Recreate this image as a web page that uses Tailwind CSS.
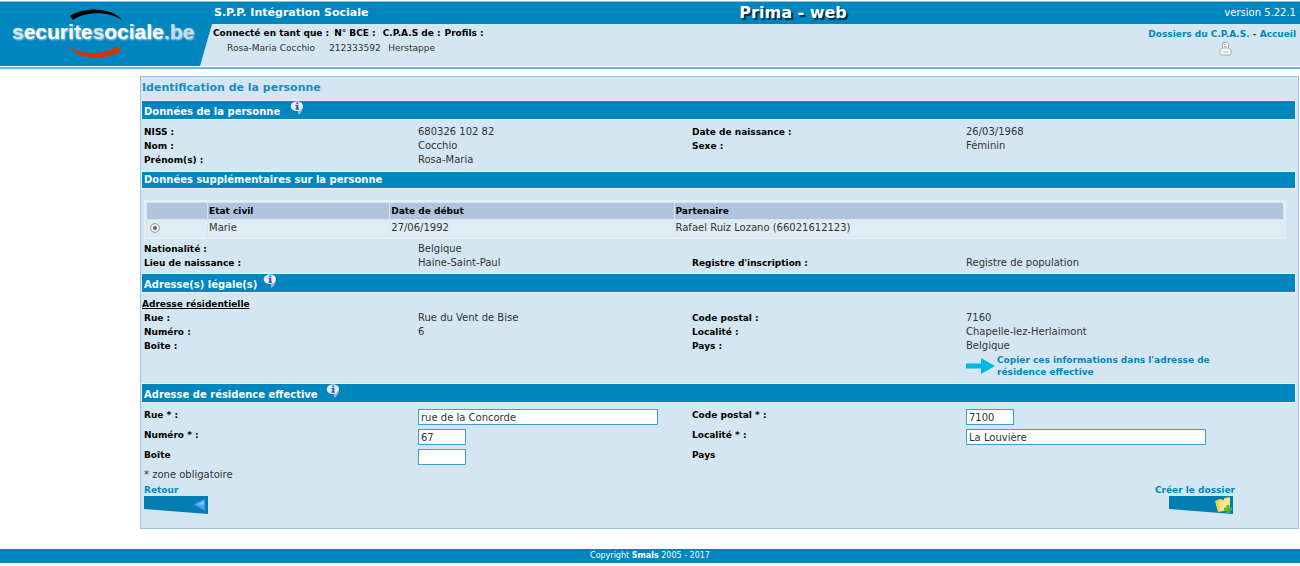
<!DOCTYPE html>
<html lang="fr">
<head>
<meta charset="utf-8">
<title>Prima - web</title>
<script src="https://cdn.jsdelivr.net/npm/@tailwindcss/browser@4"></script>
</head>
<body class="bg-white font-['Verdana','DejaVu_Sans',sans-serif] text-[10px] leading-[14px] text-[#333]">
<svg class="hidden">
  <symbol id="info" viewBox="0 0 14 14">
    <path d="M7 .5c3.600 0 6 1.900 6 4.700 0 1.700-.8 3-1.600 4.500-.8 1.500-1.600 3.300-3.200 3.800.5-1.200.5-2.500 0-3.500C3.500 10.200.8 8 .8 5.200.8 2.400 3.400.5 7 .5z" fill="#ececf8"/>
    <path d="M13 5c-.5 2.500-2 4-4.500 5 .6 1.200.4 2.300-.3 3.500 2.600-.9 4.700-5 4.800-8.500z" fill="#b4afc8"/>
    <path d="M6.300 1.500h2v1.700h-2zM5.400 4h2.900v3.600H9v1.100H5.400V7.600h.9V5.100h-.9z" fill="#2456c8"/>
  </symbol>
</svg>

<header class="mt-px border-t border-[#8cc4e0]">
  <div class="flex bg-[#d4e6f2]">
    <div class="relative h-16 w-[212px] shrink-0 bg-[#0086bf] [clip-path:polygon(0_0,100%_0,100%_22px,200px_100%,0_100%)]">
      <svg class="absolute left-[68px] top-1.5" width="58" height="52" viewBox="0 0 58 52">
        <path d="M2 8C14-1 44-2 55 13 42 3 18 3 5 12z" fill="#000"/>
        <path d="M1 38c11 9 33 10 49 0l3 5C36 53 11 53 1 38z" fill="#d23600"/>
      </svg>
      <div class="absolute left-3 top-[18px] whitespace-nowrap font-['Liberation_Sans',sans-serif] text-[21px] font-bold leading-6 text-white [text-shadow:1px_1px_2px_#b5d4e5]"><span class="text-[#d4e6f2]">s</span>ecurite<span class="text-[#d4e6f2]">s</span>ociale<span class="text-[#c3dfee]">.be</span></div>
    </div>
    <div class="min-w-0 flex-1">
      <div class="grid h-[22px] grid-cols-[48fr_40fr_12fr] items-center bg-[#0086bf] pl-0.5 pr-1 text-white">
        <span class="text-[11px] font-bold">S.P.P. Intégration Sociale</span>
        <h1 class="pl-1.5 text-base font-bold leading-5 [text-shadow:2px_2px_1px_#002b45]">Prima - web</h1>
        <span class="text-right">version 5.22.1</span>
      </div>
      <div class="flex justify-between pl-px pr-1 pt-0.5">
        <table class="h-[30px] text-center text-[9px]">
          <thead><tr class="text-black"><th>Connecté en tant que :</th><th class="pr-0.5">N° BCE :</th><th class="pr-1">C.P.A.S de :</th><th>Profils :</th></tr></thead>
          <tbody><tr><td>Rosa-Maria Cocchio</td><td class="pr-0.5">212333592</td><td class="pr-1">Herstappe</td><td></td></tr></tbody>
        </table>
        <div class="text-[9px] font-bold">
          <nav class="pt-px"><a href="#" class="text-[#0086bf]">Dossiers du C.P.A.S.</a> - <a href="#" class="text-[#0086bf]">Accueil</a></nav>
          <button type="button" aria-label="Imprimer" class="ml-auto mr-16 block">
            <svg width="13" height="15" viewBox="0 0 13 15" fill="#fafafa" stroke="#a8a8a8"><path d="M3.500 7.500l.5-6h4l1.500 1.500v4.500z"/><path d="M1 9l2-2h7l2 2v4l-1 1H2l-1-1z"/><path d="M5 3.500h2M5 5.500h3M3.500 11h6" stroke="#b5b5b5"/></svg>
          </button>
        </div>
      </div>
    </div>
  </div>
  <div class="mt-px border-b-2 border-[#6db5da]"></div>
</header>

<main class="ml-[140px] mr-px mt-[7px] border border-[#9dc3e3] bg-[#d4e6f2] pb-3.5 pl-px pr-[3px]">
  <h2 class="h-6 pt-1 text-[11px] font-bold text-[#1a8cc4]">Identification de la personne</h2>

  <h3 class="flex h-[18px] items-center gap-2.5 bg-[#0086bf] pl-0.5 pt-1 text-[10px] font-bold text-white outline outline-[#e9f3f9]">Données de la personne <svg class="mb-2 size-3.5"><use href="#info"/></svg></h3>
  <dl class="grid grid-cols-4 pb-[5px] pl-0.5 pr-[55px] pt-1.5 [&_dt]:text-[9px] [&_dt]:font-bold [&_dt]:text-black">
    <dt>NISS :</dt><dd>680326 102 82</dd><dt>Date de naissance :</dt><dd>26/03/1968</dd>
    <dt>Nom :</dt><dd>Cocchio</dd><dt>Sexe :</dt><dd>Féminin</dd>
    <dt>Prénom(s) :</dt><dd>Rosa-Maria</dd>
  </dl>

  <h3 class="flex h-4 items-center bg-[#0086bf] pl-0.5 text-[10px] font-bold text-white outline outline-[#e9f3f9]">Données supplémentaires sur la personne</h3>
  <div class="ml-0.5 mr-[9px] mt-3 border-2 border-[#e3eff7]">
    <table class="w-full table-fixed border-separate border-spacing-px text-left">
      <colgroup><col class="w-[60px]"><col class="w-4/25"><col class="w-1/4"><col></colgroup>
      <thead><tr class="bg-[#b0c4de] text-[9px] text-black [&_th]:h-4 [&_th]:px-px"><th></th><th>Etat civil</th><th>Date de début</th><th>Partenaire</th></tr></thead>
      <tbody><tr class="bg-[#dfecf4] [&_td]:h-4 [&_td]:px-px"><td class="leading-none"><input type="radio" checked aria-label="Marie" class="ml-0.5 block size-2.5 appearance-none rounded-full border border-[#aaa] bg-[#666] shadow-[inset_0_0_0_2px_#eee]"></td><td>Marie</td><td>27/06/1992</td><td>Rafael Ruiz Lozano (66021612123)</td></tr></tbody>
    </table>
  </div>
  <dl class="grid grid-cols-4 pb-1 pl-0.5 pr-[55px] pt-[3px] [&_dt]:text-[9px] [&_dt]:font-bold [&_dt]:text-black">
    <dt>Nationalité :</dt><dd class="col-span-3">Belgique</dd>
    <dt>Lieu de naissance :</dt><dd>Haine-Saint-Paul</dd><dt>Registre d'inscription :</dt><dd>Registre de population</dd>
  </dl>

  <h3 class="flex h-[18px] items-center gap-1.5 bg-[#0086bf] pl-0.5 pt-1 text-[10px] font-bold text-white outline outline-[#e9f3f9]">Adresse(s) légale(s)<svg class="mb-2 size-3.5"><use href="#info"/></svg></h3>
  <h4 class="pt-[5px] text-[9px] font-bold text-black underline">Adresse résidentielle</h4>
  <dl class="grid grid-cols-4 pl-0.5 pr-[55px] [&_dt]:text-[9px] [&_dt]:font-bold [&_dt]:text-black">
    <dt>Rue :</dt><dd>Rue du Vent de Bise</dd><dt>Code postal :</dt><dd>7160</dd>
    <dt>Numéro :</dt><dd>6</dd><dt>Localité :</dt><dd>Chapelle-lez-Herlaimont</dd>
    <dt>Boîte :</dt><dd></dd><dt>Pays :</dt><dd>Belgique</dd>
  </dl>
  <div class="grid grid-cols-4 pb-1.5 pl-0.5 pr-[55px] pt-px">
    <a href="#" class="col-start-4 flex items-center text-[9px] font-bold leading-3 text-[#0086bf]">
      <svg class="mr-0.5 shrink-0" width="29" height="16" viewBox="0 0 29 16" fill="#00b7e2"><path d="M0 5.500h15V0l14 8-14 8v-5.500H0z"/></svg>
      <span>Copier ces informations dans l'adresse de résidence effective</span>
    </a>
  </div>

  <h3 class="flex h-[18px] items-center gap-2 bg-[#0086bf] pl-0.5 pt-1 text-[10px] font-bold text-white outline outline-[#e9f3f9]">Adresse de résidence effective <svg class="mb-2 size-3.5"><use href="#info"/></svg></h3>
  <form class="grid grid-cols-4 pl-0.5 pr-[55px] pt-1.5 [&_input]:mt-px [&_input]:h-4 [&_input]:border [&_input]:border-[#3aa0cf] [&_input]:bg-white [&_input]:px-0.5 [&_label]:h-5 [&_label]:text-[9px] [&_label]:font-bold [&_label]:text-black">
    <label for="rue">Rue * :</label><input id="rue" value="rue de la Concorde" class="w-60">
    <label for="cp">Code postal * :</label><input id="cp" value="7100" class="w-12">
    <label for="num">Numéro * :</label><input id="num" value="67" class="w-12">
    <label for="loc">Localité * :</label><input id="loc" value="La Louvière" class="w-60">
    <label for="boite">Boîte</label><input id="boite" class="w-12">
    <span class="text-[9px] font-bold text-black">Pays</span>
  </form>
  <p class="pl-0.5">* zone obligatoire</p>
  <div class="flex justify-between pl-0.5 pr-[60px] pt-0.5 text-[9px] font-bold leading-3 text-[#0086bf]">
    <button type="button" class="text-left">Retour
      <svg class="block" width="64" height="18" viewBox="0 0 64 18"><path d="M0 0h64v18L0 13z" fill="#007db3"/><path d="M49.500 8.500L61 2.500v12.500z" fill="#4ea2fa" stroke="#2b6fdc" stroke-width=".8"/><path d="M53 8.500l7-3.500v3.500z" fill="#8cc8ff"/></svg>
    </button>
    <button type="button" class="text-right">Créer le dossier
      <svg class="ml-auto mr-0.5 block" width="64" height="18" viewBox="0 0 64 18"><path d="M0 0h64v18L0 13z" fill="#007db3"/><path d="M46 5l5-2 4 1 0-2 6-1v13l-12 2z" fill="#f4d453"/><path d="M50 6l5-1 1-2 5-1v10l-10 3z" fill="#fbe98a"/><path d="M57.500 9h3v2.500H63v3h-2.500V17h-3v-2.500H55v-3h2.500z" fill="#52b82e"/></svg>
    </button>
  </div>
</main>

<footer class="mt-5 bg-[#0086bf] text-center text-[8px] leading-[14px] text-white">Copyright <b>Smals</b> 2005 - 2017</footer>
</body>
</html>
